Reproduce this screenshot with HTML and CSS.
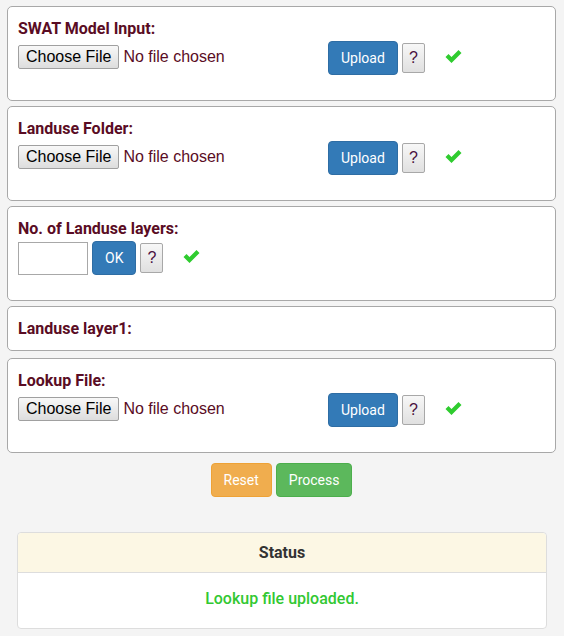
FILE: index.html
```html
<!DOCTYPE html>
<html>
<head>
<meta charset="utf-8">
<link rel="stylesheet" href="styles.css">
</head>
<body>
<div class="page">
  <div class="card">
    <div class="title">SWAT Model Input:</div>
    <div class="row">
      <div class="file-wrap"><input class="file" type="file"></div>
      <button class="btn btn-blue">Upload</button>
      <button class="help">?</button>
      <svg class="check" width="17" height="13" viewBox="0 0 17 13"><path d="M0.5 7 L3.5 4 L6.5 7 L13.5 0 L16.5 3 L6.5 13 Z" fill="#2fcc2f"/></svg>
    </div>
  </div>
  <div class="card">
    <div class="title">Landuse Folder:</div>
    <div class="row">
      <div class="file-wrap"><input class="file" type="file"></div>
      <button class="btn btn-blue">Upload</button>
      <button class="help">?</button>
      <svg class="check" width="17" height="13" viewBox="0 0 17 13"><path d="M0.5 7 L3.5 4 L6.5 7 L13.5 0 L16.5 3 L6.5 13 Z" fill="#2fcc2f"/></svg>
    </div>
  </div>
  <div class="card">
    <div class="title">No. of Landuse layers:</div>
    <div class="row">
      <input class="num" type="text">
      <button class="btn btn-blue">OK</button>
      <button class="help">?</button>
      <svg class="check" width="17" height="13" viewBox="0 0 17 13"><path d="M0.5 7 L3.5 4 L6.5 7 L13.5 0 L16.5 3 L6.5 13 Z" fill="#2fcc2f"/></svg>
    </div>
  </div>
  <div class="card card-short">
    <div class="title">Landuse layer1:</div>
  </div>
  <div class="card">
    <div class="title">Lookup File:</div>
    <div class="row">
      <div class="file-wrap"><input class="file" type="file"></div>
      <button class="btn btn-blue">Upload</button>
      <button class="help">?</button>
      <svg class="check" width="17" height="13" viewBox="0 0 17 13"><path d="M0.5 7 L3.5 4 L6.5 7 L13.5 0 L16.5 3 L6.5 13 Z" fill="#2fcc2f"/></svg>
    </div>
  </div>
  <div class="actions">
    <button class="btn btn-orange">Reset</button>
    <button class="btn btn-green">Process</button>
  </div>
  <div class="status">
    <div class="status-head">Status</div>
    <div class="status-body">Lookup file uploaded.</div>
  </div>
</div>
</body>
</html>
```

FILE: styles.css
```css
html, body {
  margin: 0;
  padding: 0;
  background: #f4f4f4;
}
.page {
  padding: 6px 8px 0 7px;
  font-family: Roboto, "Liberation Sans", sans-serif;
}
.card {
  background: #fff;
  border: 1px solid #a8a8a8;
  border-radius: 5px;
  padding: 12px 10px 13px 10px;
  margin-bottom: 5px;
}
.card-short {
  padding-bottom: 11px;
  margin-bottom: 7px;
}
.card-short .title {
  margin-bottom: 0;
}
.title {
  font-size: 16px;
  line-height: 20px;
  font-weight: 700;
  color: #5a0c24;
  margin-bottom: 2px;
}
.row {
  display: flex;
  align-items: center;
  height: 34px;
  margin-bottom: 12px;
}
.file-wrap {
  width: 310px;
  display: flex;
  align-items: center;
  margin-top: -2px;
}
.file {
  font-family: "Liberation Sans", Arial, sans-serif;
  font-size: 16px;
  color: #5a0c24;
  width: 300px;
}
.file::file-selector-button {
  font-family: "Liberation Sans", Arial, sans-serif;
  font-size: 16px;
  color: #000;
  background: linear-gradient(#f8f8f8, #dddddd);
  border: 1px solid #a0a0a0;
  border-radius: 2px;
  padding: 2px 7px;
  margin-right: 4px;
}
.btn {
  font-family: Roboto, "Liberation Sans", sans-serif;
  font-size: 14px;
  line-height: 20px;
  padding: 6px 12px;
  border: 1px solid transparent;
  border-radius: 4px;
  color: #fff;
}
.btn-blue {
  background: #337ab7;
  border-color: #2e6da4;
}
.btn-orange {
  background: #f0ad4e;
  border-color: #eea236;
}
.btn-green {
  background: #5cb85c;
  border-color: #4cae4c;
}
.help {
  margin-left: 4px;
  height: 30px;
  width: 23px;
  padding: 0;
  font-family: "Liberation Sans", Arial, sans-serif;
  font-size: 16px;
  color: #4a1040;
  background: linear-gradient(#f7f7f7, #e0e0e0);
  border: 1px solid #a8a8a8;
  border-radius: 2px;
}
.check {
  margin-left: 20px;
  margin-top: -3px;
}
.num {
  box-sizing: border-box;
  width: 70px;
  height: 33px;
  border: 1px solid #a8a8a8;
  margin: 0 4px 0 0;
  padding: 0;
}
.actions {
  display: flex;
  justify-content: center;
  gap: 4px;
  margin-top: 10px;
}
.status {
  margin: 35px 9px 0 10px;
  background: #fff;
  border: 1px solid #dddddd;
  border-radius: 4px;
}
.status-head {
  background: #fcf7e4;
  border-bottom: 1px solid #dddddd;
  border-radius: 4px 4px 0 0;
  height: 39px;
  line-height: 39px;
  text-align: center;
  font-weight: 700;
  font-size: 16px;
  color: #333;
}
.status-body {
  height: 51px;
  padding-bottom: 4px;
  line-height: 51px;
  text-align: center;
  font-size: 16px;
  font-weight: 500;
  color: #32c832;
}
```
